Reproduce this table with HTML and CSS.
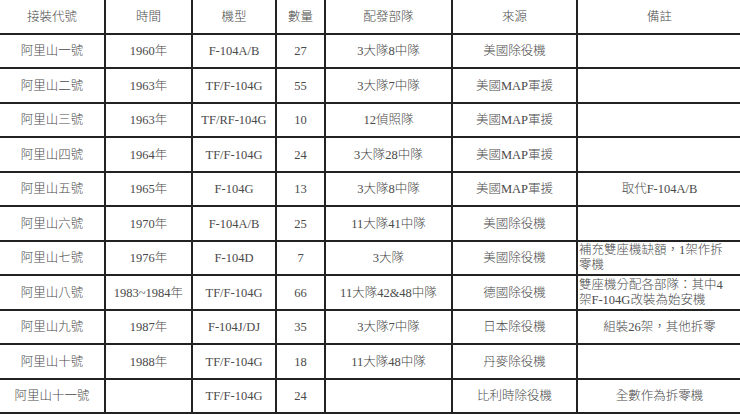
FILE: index.html
```html
<!DOCTYPE html>
<html lang="zh-Hant">
<head>
<meta charset="utf-8">
<link rel="stylesheet" href="styles.css">
</head>
<body>
<div class="frame">
<table class="grid">
<colgroup>
<col class="c1"><col class="c2"><col class="c3"><col class="c4"><col class="c5"><col class="c6"><col class="c7">
</colgroup>
<thead>
<tr><th>接裝代號</th><th>時間</th><th>機型</th><th>數量</th><th>配發部隊</th><th>來源</th><th>備註</th></tr>
</thead>
<tbody>
<tr><td>阿里山一號</td><td>1960年</td><td>F-104A/B</td><td>27</td><td>3大隊8中隊</td><td>美國除役機</td><td></td></tr>
<tr><td>阿里山二號</td><td>1963年</td><td>TF/F-104G</td><td>55</td><td>3大隊7中隊</td><td>美國MAP軍援</td><td></td></tr>
<tr><td>阿里山三號</td><td>1963年</td><td>TF/RF-104G</td><td>10</td><td>12偵照隊</td><td>美國MAP軍援</td><td></td></tr>
<tr><td>阿里山四號</td><td>1964年</td><td>TF/F-104G</td><td>24</td><td>3大隊28中隊</td><td>美國MAP軍援</td><td></td></tr>
<tr><td>阿里山五號</td><td>1965年</td><td>F-104G</td><td>13</td><td>3大隊8中隊</td><td>美國MAP軍援</td><td>取代F-104A/B</td></tr>
<tr><td>阿里山六號</td><td>1970年</td><td>F-104A/B</td><td>25</td><td>11大隊41中隊</td><td>美國除役機</td><td></td></tr>
<tr><td>阿里山七號</td><td>1976年</td><td>F-104D</td><td>7</td><td>3大隊</td><td>美國除役機</td><td class="note">補充雙座機缺額，1架作拆<br>零機</td></tr>
<tr><td>阿里山八號</td><td>1983~1984年</td><td>TF/F-104G</td><td>66</td><td>11大隊42&amp;48中隊</td><td>德國除役機</td><td class="note">雙座機分配各部隊：其中4<br>架F-104G改裝為始安機</td></tr>
<tr><td>阿里山九號</td><td>1987年</td><td>F-104J/DJ</td><td>35</td><td>3大隊7中隊</td><td>日本除役機</td><td>組裝26架，其他拆零</td></tr>
<tr><td>阿里山十號</td><td>1988年</td><td>TF/F-104G</td><td>18</td><td>11大隊48中隊</td><td>丹麥除役機</td><td></td></tr>
<tr><td>阿里山十一號</td><td></td><td>TF/F-104G</td><td>24</td><td></td><td>比利時除役機</td><td>全數作為拆零機</td></tr>
</tbody>
</table>
</div>
</body>
</html>
```

FILE: styles.css
```css
html, body {
  margin: 0;
  padding: 0;
  background: #ffffff;
}

.frame {
  width: 740px;
  height: 414px;
  overflow: hidden;
}

.grid {
  margin: -2px 0 0 -2px;
  border-collapse: collapse;
  table-layout: fixed;
  width: 743px;
  font-family: "Liberation Serif", "Noto Sans CJK TC", serif;
  font-size: 12.5px;
  font-weight: 300;
  color: #4a4a4a;
}

.c1 { width: 106px; }
.c2 { width: 87px; }
.c3 { width: 84px; }
.c4 { width: 49px; }
.c5 { width: 127px; }
.c6 { width: 125px; }
.c7 { width: 165px; }

.grid th,
.grid td {
  border: 2px solid #222222;
  height: 30.5px;
  padding: 2px 0 0 0;
  text-align: center;
  vertical-align: middle;
  font-weight: 300;
  line-height: 15px;
  white-space: nowrap;
}

.grid td.note {
  text-align: left;
  padding: 1px 0 0 1px;
  line-height: 15px;
}
```
